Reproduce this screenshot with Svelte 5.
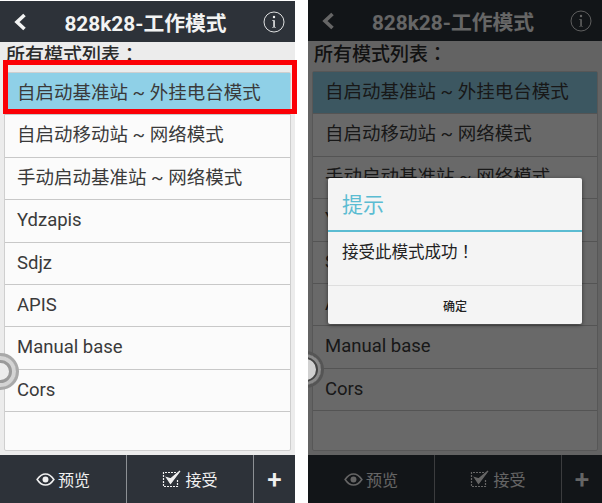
<script>
  const modes = [
    '自启动基准站 ~ 外挂电台模式',
    '自启动移动站 ~ 网络模式',
    '手动启动基准站 ~ 网络模式',
    'Ydzapis',
    'Sdjz',
    'APIS',
    'Manual base',
    'Cors'
  ];
</script>

{#snippet phone(dimmed)}
  <section class="phone" class:dimmed>
    <header class="topbar">
      <svg class="back" viewBox="0 0 16 20" width="16" height="20" aria-hidden="true">
        <path d="M12.5 3 L5 10 L12.5 17" fill="none" stroke="currentColor" stroke-width="3.6" />
      </svg>
      <h1>828k28-工作模式</h1>
      <svg class="info" viewBox="0 0 22 22" width="22" height="22" aria-hidden="true">
        <circle cx="11" cy="11" r="10" fill="none" stroke="currentColor" stroke-width="0.9" />
        <circle cx="11" cy="6" r="1.2" fill="currentColor" />
        <path d="M9.2 9.2 H11.8 V15.9 H13 V16.6 H9 V15.9 H10.3 V9.9 H9.2 Z" fill="currentColor" />
      </svg>
    </header>

    <main class="content">
      <p class="label">所有模式列表：</p>
      <ul class="modes">
        {#each modes as mode, i}
          <li class:selected={i === 0}>{mode}</li>
        {/each}
      </ul>
    </main>

    <footer class="actions">
      <button class="preview">
        <svg viewBox="0 0 20 14" width="19" height="13" aria-hidden="true">
          <path d="M1 7 C4 2.5 7 1 10 1 C13 1 16 2.5 19 7 C16 11.500 13 13 10 13 C7 13 4 11.500 1 7 Z" fill="none" stroke="currentColor" stroke-width="1.7" />
          <circle cx="10" cy="7" r="3.200" fill="currentColor" />
        </svg>
        预览
      </button>
      <button class="accept">
        <svg viewBox="0 0 20 18" width="20" height="18" aria-hidden="true">
          <path d="M14 2.500 H1.500 V16.500 H15.500 V10" fill="none" stroke="currentColor" stroke-width="1.200" stroke-dasharray="2 1" />
          <path d="M4.500 7.500 L8.500 13.500 L18 1 L8.800 8.800 Z" fill="currentColor" stroke="currentColor" stroke-width="1.200" />
        </svg>
        接受
      </button>
      <button class="more">+</button>
    </footer>

    {#if dimmed}
      <div class="scrim"></div>
      <div class="dialog">
        <h2>提示</h2>
        <p>接受此模式成功！</p>
        <button>确定</button>
      </div>
    {:else}
      <div class="highlight"></div>
    {/if}

    <div class="floater"></div>
  </section>
{/snippet}

<div class="page">
  {@render phone(false)}
  {@render phone(true)}
</div>

<style>
  :global(body) {
    background: #fff;
  }

  .page {
    display: flex;
    gap: 13px;
    width: 602px;
    height: 503px;
    overflow: hidden;
    background: #fff;
    font-family: Roboto, "Noto Sans CJK SC", sans-serif;
  }

  .phone {
    position: relative;
    display: flex;
    flex-direction: column;
    flex: none;
    width: 295px;
    height: 502px;
    margin-top: 1px;
  }

  .phone.dimmed {
    width: 294px;
    height: 503px;
    margin-top: 0;
    overflow: hidden;
  }

  .topbar {
    display: flex;
    flex: none;
    align-items: center;
    height: 41px;
    padding: 0 10px 0 12px;
    color: #f2f3f3;
    background: #2d3239;
  }

  h1 {
    flex: 1;
    margin: 0;
    font-size: 20.800px;
    font-weight: 700;
    text-align: center;
    white-space: nowrap;
  }

  .content {
    flex: 1;
    display: flex;
    flex-direction: column;
    min-height: 0;
    padding: 0 4px 4px;
    background: #ececec;
  }

  .label {
    flex: none;
    height: 30px;
    margin: 0 0 0 2px;
    font-family: Roboto, "Noto Sans CJK TC", sans-serif;
    font-size: 19px;
    font-weight: 500;
    line-height: 28px;
    color: #2b2b2b;
  }

  .modes {
    flex: 1;
    min-height: 0;
    margin: 0;
    padding: 0;
    list-style: none;
    border: 1px solid #cfcfcf;
    border-radius: 2px;
    background: #fbfbfb;
  }

  li {
    height: 42.400px;
    box-sizing: border-box;
    padding-left: 12px;
    font-size: 18.500px;
    line-height: 41px;
    color: #3a3a3a;
    border-bottom: 1px solid #c8c8c8;
    white-space: nowrap;
  }

  li.selected {
    background: #8fd0e7;
  }

  .actions {
    display: flex;
    flex: none;
    height: 48px;
    color: #f0f0f0;
    background: #2d3239;
  }

  .actions button {
    display: flex;
    align-items: center;
    justify-content: center;
    gap: 3px;
    padding: 0;
    border: 0;
    border-right: 1px solid #8c9094;
    font: inherit;
    font-size: 16px;
    color: inherit;
    background: none;
  }

  .preview {
    width: 127px;
  }

  .accept {
    width: 127px;
  }

  .actions .more {
    flex: 1;
    border-right: 0;
    font-size: 26px;
    font-weight: 500;
  }

  .scrim {
    position: absolute;
    inset: 0;
    background: rgba(0, 0, 0, 0.58);
  }

  .highlight {
    position: absolute;
    left: 3px;
    top: 59px;
    width: 294px;
    height: 54px;
    box-sizing: border-box;
    border: 5px solid #fb0006;
  }

  .floater {
    position: absolute;
    left: -18px;
    top: 352px;
    width: 37px;
    height: 37px;
    box-sizing: border-box;
    border: 3px solid #a9a9a9;
    border-radius: 50%;
    background: #ececec;
    box-shadow: inset 0 0 0 4px #d4d4d4, inset 0 0 0 7px #9a9a9a;
  }

  .dimmed .floater {
    left: -21px;
    top: 351px;
    border-color: #555;
    box-shadow: inset 0 0 0 3px #8a8a8a, inset 0 0 0 5px #444;
    background: #d0d0d0;
  }

  .dialog {
    position: absolute;
    left: 20px;
    top: 178px;
    width: 254px;
    height: 146px;
    border-radius: 2px;
    display: flex;
    flex-direction: column;
    background: #f4f4f4;
    box-shadow: 0 1px 4px rgba(0, 0, 0, 0.5);
  }

  h2 {
    box-sizing: border-box;
    height: 54px;
    margin: 0;
    padding-left: 14px;
    font-size: 21px;
    font-weight: 400;
    line-height: 55px;
    color: #5bbcd2;
    border-bottom: 2px solid #5bbcd2;
  }

  .dialog p {
    flex: 1;
    margin: 0;
    padding: 10px 14px 0;
    font-family: Roboto, "Noto Sans CJK TC", sans-serif;
    font-size: 16.500px;
    line-height: 22px;
    color: #222;
  }

  .dialog button {
    height: 39px;
    padding: 0;
    border: 0;
    border-top: 1px solid #dedede;
    font: inherit;
    font-size: 12px;
    font-weight: 500;
    color: #222;
    background: none;
  }
</style>
